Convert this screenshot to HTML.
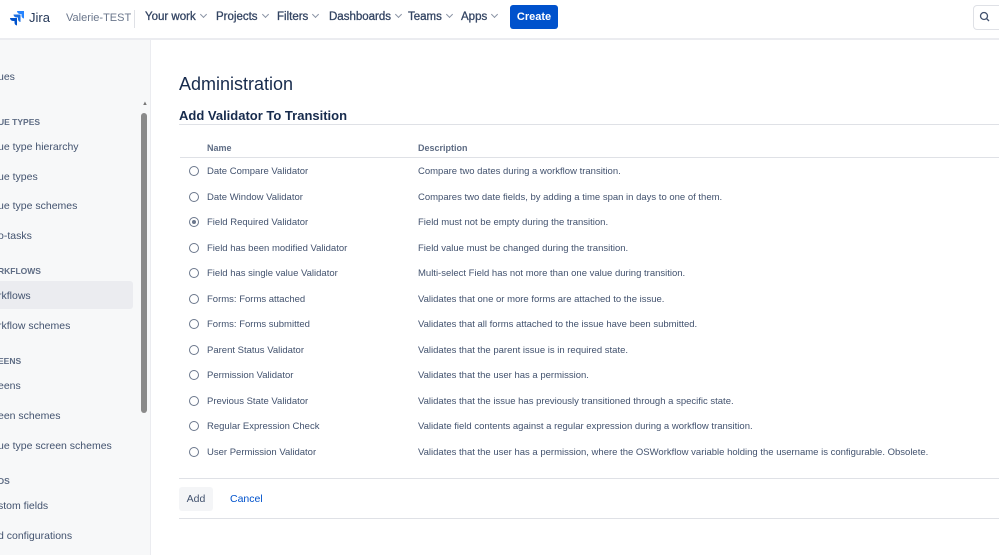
<!DOCTYPE html>
<html><head><style>
body{margin:0;width:999px;height:555px;overflow:hidden;background:#fff;font-family:"Liberation Sans",sans-serif;color:#172b4d;position:relative}
.a{position:absolute;white-space:nowrap}
.nav{font-size:11.5px;color:#344563;top:11px;-webkit-text-stroke:0.3px #344563}
.nav:after{content:"";display:inline-block;width:4px;height:4px;border-right:1px solid #8993a4;border-bottom:1px solid #8993a4;transform:rotate(45deg);margin-left:5px;position:relative;top:-3px}
.sb{font-size:10.5px;color:#42526e;left:-2px}
.sh{font-size:8.5px;font-weight:bold;color:#5e6c84;left:-2px}
.r{font-size:9.5px;color:#42526e}
.rad{position:absolute;left:189px;width:8px;height:8px;border:1px solid #6b778c;border-radius:50%}
</style></head><body>
<div class="a" style="left:0;top:0;width:999px;height:38px;border-bottom:2px solid #ebecf0"></div>
<svg class="a" style="left:9px;top:10px" width="16" height="16" viewBox="0 0 16 16"><path d="M15 1H8a3 3 0 0 0 3 3h1.5v1.5a3 3 0 0 0 2.5 3V1z" fill="#2684ff"/><path d="M11.5 4.5H4.5a3 3 0 0 0 3 3H9V9a3 3 0 0 0 2.5 3V4.5z" fill="#1d6fe0"/><path d="M8 8H1a3 3 0 0 0 3 3h1.5v1.5a3 3 0 0 0 2.5 3V8z" fill="#0052cc"/></svg>
<div class="a" style="left:29px;top:10px;font-size:13px;color:#253858">Jira</div>
<div class="a" style="left:66px;top:12px;font-size:11px;color:#6b778c">Valerie-TEST</div>
<div class="a" style="left:134px;top:10px;width:1px;height:18px;background:#dfe1e6"></div>
<div class="a nav" style="left:145px">Your work</div>
<div class="a nav" style="left:216px">Projects</div>
<div class="a nav" style="left:277px">Filters</div>
<div class="a nav" style="left:329px">Dashboards</div>
<div class="a nav" style="left:408px">Teams</div>
<div class="a nav" style="left:461px">Apps</div>
<div class="a" style="left:510px;top:5px;width:48px;height:24px;background:#0052cc;border-radius:3px;color:#fff;font-size:11px;font-weight:bold;text-align:center;line-height:24px">Create</div>
<div class="a" style="left:973px;top:5px;width:40px;height:23px;border:1px solid #dfe1e6;border-radius:4px"></div>
<svg class="a" style="left:979px;top:11px" width="12" height="12" viewBox="0 0 12 12"><circle cx="5" cy="5" r="3.5" fill="none" stroke="#42526e" stroke-width="1.3"/><path d="M7.5 7.5L10 10" stroke="#42526e" stroke-width="1.3"/></svg>
<div class="a" style="left:0;top:40px;width:150px;height:515px;background:#f7f8f9;border-right:1px solid #ebecf0"></div>
<div class="a" style="left:141px;top:113px;width:6px;height:300px;background:#8a8a8a;border-radius:3px"></div>
<div class="a" style="left:142px;top:101px;font-size:6px;color:#777">▲</div>
<div class="a sb" style="top:71px">ues</div>
<div class="a sh" style="top:117px">UE TYPES</div>
<div class="a sb" style="top:141px">ue type hierarchy</div>
<div class="a sb" style="top:171px">ue types</div>
<div class="a sb" style="top:200px">ue type schemes</div>
<div class="a sb" style="top:230px">o-tasks</div>
<div class="a sh" style="top:266px">RKFLOWS</div>
<div class="a" style="left:0;top:281px;width:133px;height:28px;background:#ebecf0;border-radius:0 3px 3px 0"></div>
<div class="a sb" style="top:290px">rkflows</div>
<div class="a sb" style="top:320px">rkflow schemes</div>
<div class="a sh" style="top:356px">EENS</div>
<div class="a sb" style="top:380px">eens</div>
<div class="a sb" style="top:410px">een schemes</div>
<div class="a sb" style="top:440px">ue type screen schemes</div>
<div class="a sh" style="top:476px">DS</div>
<div class="a sb" style="top:500px">stom fields</div>
<div class="a sb" style="top:530px">d configurations</div>
<div class="a" style="left:179px;top:74px;font-size:18px;color:#172b4d">Administration</div>
<div class="a" style="left:179px;top:108px;font-size:13px;font-weight:bold;color:#172b4d">Add Validator To Transition</div>
<div class="a" style="left:179px;top:124px;width:820px;height:1px;background:#dfe1e6"></div>
<div class="a" style="left:207px;top:143px;font-size:9px;font-weight:bold;color:#5e6c84">Name</div>
<div class="a" style="left:418px;top:143px;font-size:9px;font-weight:bold;color:#5e6c84">Description</div>
<div class="a" style="left:180px;top:157px;width:819px;height:1px;background:#dfe1e6"></div>
<div class="rad" style="top:166px"></div><div class="a r" style="left:207px;top:166px">Date Compare Validator</div><div class="a r" style="left:418px;top:166px">Compare two dates during a workflow transition.</div>
<div class="rad" style="top:192px"></div><div class="a r" style="left:207px;top:192px">Date Window Validator</div><div class="a r" style="left:418px;top:192px">Compares two date fields, by adding a time span in days to one of them.</div>
<div class="rad" style="top:217px"></div><div class="a" style="left:192px;top:220px;width:4px;height:4px;border-radius:50%;background:#6b778c"></div><div class="a r" style="left:207px;top:217px">Field Required Validator</div><div class="a r" style="left:418px;top:217px">Field must not be empty during the transition.</div>
<div class="rad" style="top:243px"></div><div class="a r" style="left:207px;top:243px">Field has been modified Validator</div><div class="a r" style="left:418px;top:243px">Field value must be changed during the transition.</div>
<div class="rad" style="top:268px"></div><div class="a r" style="left:207px;top:268px">Field has single value Validator</div><div class="a r" style="left:418px;top:268px">Multi-select Field has not more than one value during transition.</div>
<div class="rad" style="top:294px"></div><div class="a r" style="left:207px;top:294px">Forms: Forms attached</div><div class="a r" style="left:418px;top:294px">Validates that one or more forms are attached to the issue.</div>
<div class="rad" style="top:319px"></div><div class="a r" style="left:207px;top:319px">Forms: Forms submitted</div><div class="a r" style="left:418px;top:319px">Validates that all forms attached to the issue have been submitted.</div>
<div class="rad" style="top:345px"></div><div class="a r" style="left:207px;top:345px">Parent Status Validator</div><div class="a r" style="left:418px;top:345px">Validates that the parent issue is in required state.</div>
<div class="rad" style="top:370px"></div><div class="a r" style="left:207px;top:370px">Permission Validator</div><div class="a r" style="left:418px;top:370px">Validates that the user has a permission.</div>
<div class="rad" style="top:396px"></div><div class="a r" style="left:207px;top:396px">Previous State Validator</div><div class="a r" style="left:418px;top:396px">Validates that the issue has previously transitioned through a specific state.</div>
<div class="rad" style="top:421px"></div><div class="a r" style="left:207px;top:421px">Regular Expression Check</div><div class="a r" style="left:418px;top:421px">Validate field contents against a regular expression during a workflow transition.</div>
<div class="rad" style="top:447px"></div><div class="a r" style="left:207px;top:447px">User Permission Validator</div><div class="a r" style="left:418px;top:447px">Validates that the user has a permission, where the OSWorkflow variable holding the username is configurable. Obsolete.</div>
<div class="a" style="left:179px;top:478px;width:820px;height:1px;background:#dfe1e6"></div>
<div class="a" style="left:179px;top:487px;width:34px;height:24px;background:#f4f5f7;border-radius:3px;font-size:10.5px;color:#42526e;text-align:center;line-height:24px">Add</div>
<div class="a" style="left:230px;top:493px;font-size:10.5px;color:#0052cc">Cancel</div>
<div class="a" style="left:179px;top:518px;width:820px;height:1px;background:#dfe1e6"></div>
</body></html>
